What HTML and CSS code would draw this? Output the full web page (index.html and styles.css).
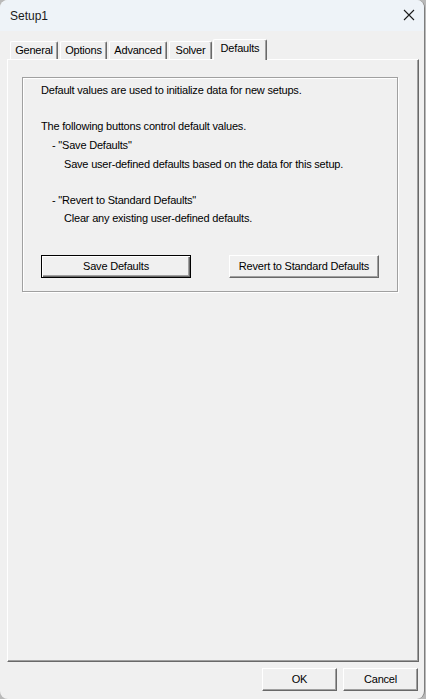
FILE: index.html
```html
<!DOCTYPE html>
<html>
<head>
<meta charset="utf-8">
<link rel="stylesheet" href="styles.css">
</head>
<body>
<div class="window">
  <div class="titlebar">
    <span class="title">Setup1</span>
    <svg class="close" width="12" height="12" viewBox="0 0 12 12"><path d="M1 1 L11 11 M11 1 L1 11" stroke="#1b1b1b" stroke-width="1.1" fill="none"/></svg>
  </div>
  <div class="content">
    <div class="tabstrip">
      <div class="tab tab-general">General</div>
      <div class="tab tab-options">Options</div>
      <div class="tab tab-advanced">Advanced</div>
      <div class="tab tab-solver">Solver</div>
      <div class="tab tab-selected">Defaults</div>
    </div>
    <div class="panel">
      <div class="groupbox">
        <div class="line l1">Default values are used to initialize data for new setups.</div>
        <div class="line l2">The following buttons control default values.</div>
        <div class="line l3 ind1">- "Save Defaults"</div>
        <div class="line l4 ind2">Save user-defined defaults based on the data for this setup.</div>
        <div class="line l5 ind1">- "Revert to Standard Defaults"</div>
        <div class="line l6 ind2">Clear any existing user-defined defaults.</div>
        <div class="btnrow">
          <div class="btn btn-default btn-wide">Save Defaults</div>
          <div class="btn btn-wide">Revert to Standard Defaults</div>
        </div>
      </div>
    </div>
    <div class="footer">
      <div class="btn btn-small">OK</div>
      <div class="btn btn-small">Cancel</div>
    </div>
  </div>
</div>
</body>
</html>
```
FILE: styles.css
```css
html, body {
  margin: 0;
  padding: 0;
  width: 426px;
  height: 699px;
  background: #b9b9b9;
  overflow: hidden;
}
.window {
  width: 424px;
  height: 699px;
  background: #f0f0f0;
  border-right: 1px solid #7d7d7d;
  border-radius: 8px;
  overflow: hidden;
  font-family: "Liberation Sans", Arial, sans-serif;
  font-size: 11px;
  letter-spacing: -0.2px;
  color: #000;
}
.titlebar {
  height: 31px;
  background: #eef3f8;
  display: flex;
  align-items: center;
  justify-content: space-between;
  padding: 0 9px 0 10px;
}
.title {
  font-size: 12px;
  letter-spacing: 0;
  color: #1a1a1a;
}
.close {
  display: block;
  margin-top: -1px;
}
.content {
  display: flex;
  flex-direction: column;
}
.tabstrip {
  display: flex;
  align-items: flex-end;
  padding: 8px 0 0 10px;
  height: 20px;
}
.tab {
  box-sizing: border-box;
  height: 18px;
  line-height: 16px;
  text-align: center;
  border-top: 1px solid #fff;
  border-left: 1px solid #fff;
  border-right: 1px solid #696969;
  box-shadow: inset -1px 0 0 #a0a0a0;
  border-radius: 2px 2px 0 0;
  margin-right: 1px;
}
.tab-general { width: 48px; }
.tab-options { width: 47px; margin-left: 1px; }
.tab-advanced { width: 58px; margin-left: 1px; }
.tab-solver { width: 43px; margin-left: 1px; margin-right: 0; }
.tab-selected {
  width: 54px;
  height: 21px;
  line-height: 16px;
  margin-left: 1px;
  margin-bottom: -1px;
  background: #f0f0f0;
  position: relative;
  z-index: 1;
}
.panel {
  box-sizing: border-box;
  width: 412px;
  height: 603px;
  margin-left: 7px;
  border-top: 1px solid #fff;
  border-left: 1px solid #fff;
  border-right: 1px solid #696969;
  border-bottom: 1px solid #696969;
  box-shadow: inset -1px -1px 0 #a0a0a0;
  padding: 17px 0 0 14px;
}
.groupbox {
  box-sizing: border-box;
  width: 376px;
  height: 215px;
  border: 1px solid #a0a0a0;
  box-shadow: inset 1px 1px 0 #fff, 1px 1px 0 #fff;
  padding: 3px 0 0 18px;
}
.line {
  line-height: 18px;
  height: 18px;
  white-space: nowrap;
}
.l2 { margin-top: 18px; }
.l3 { margin-top: 1px; }
.l4 { margin-top: 1px; }
.l5 { margin-top: 18px; }
.ind1 { padding-left: 11px; }
.ind2 { padding-left: 23px; }
.btnrow {
  display: flex;
  gap: 38px;
  margin-top: 28px;
}
.btn {
  box-sizing: border-box;
  height: 23px;
  line-height: 21px;
  text-align: center;
  background: #f0f0f0;
  border-top: 1px solid #fff;
  border-left: 1px solid #fff;
  border-right: 1px solid #696969;
  border-bottom: 1px solid #696969;
  box-shadow: inset -1px -1px 0 #a0a0a0;
}
.btn-wide { width: 150px; }
.btn-default {
  border: 1px solid #000;
  box-shadow: inset 1px 1px 0 #fff, inset -1px -1px 0 #696969, inset -2px -2px 0 #a0a0a0;
}
.footer {
  display: flex;
  justify-content: flex-end;
  gap: 6px;
  padding: 6px 6px 0 0;
}
.btn-small { width: 75px; }
```
